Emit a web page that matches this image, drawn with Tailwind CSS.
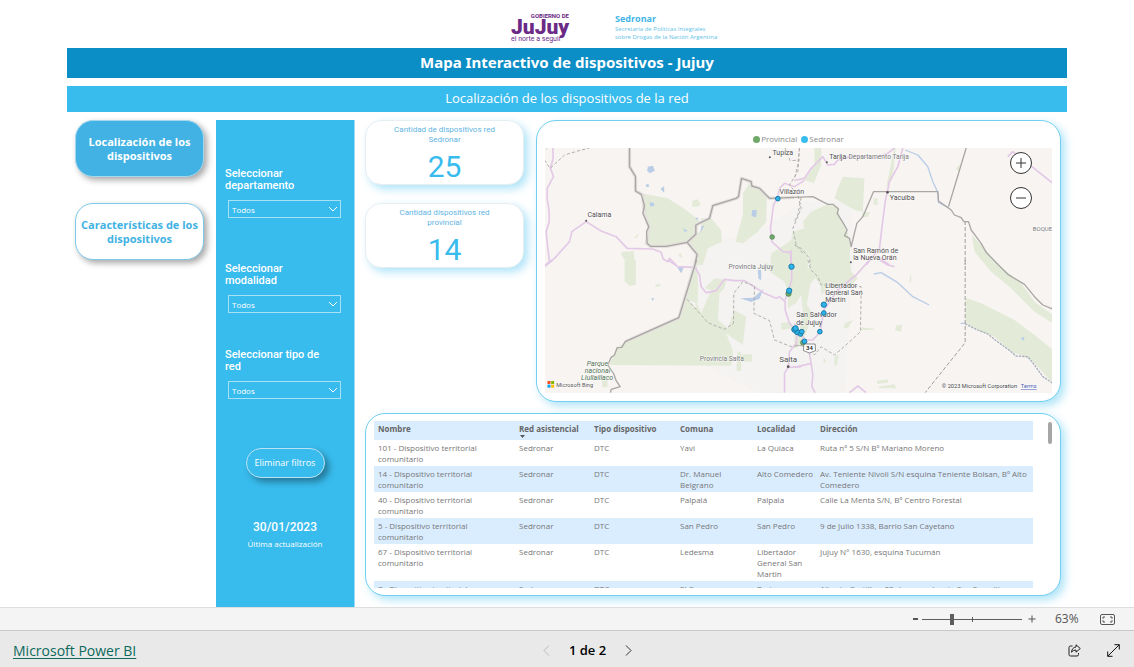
<!DOCTYPE html>
<html lang="es">
<head>
<meta charset="utf-8">
<meta name="viewport" content="width=device-width, initial-scale=1">
<title>Mapa Interactivo de dispositivos - Jujuy</title>
<script src="https://cdn.jsdelivr.net/npm/@tailwindcss/browser@4"></script>
</head>
<body class="flex h-screen flex-col overflow-hidden bg-white font-['Open_Sans',sans-serif]">

<main class="flex min-h-0 flex-1 flex-col overflow-hidden px-[67px]">
  <header class="flex h-12 shrink-0 items-start justify-center gap-[46px] pt-[13px] pl-[142px]">
    <div class="flex w-[58px] flex-col font-[Roboto,sans-serif] text-[#6b2a86]">
      <span class="text-right text-[6px] leading-[6px] font-bold">GOBIERNO DE</span>
      <span class="text-[21px] leading-[16px] font-black">JuJuy</span>
      <span class="text-[7px] leading-[8px] whitespace-nowrap">el norte a seguir</span>
    </div>
    <div class="w-[150px] text-[#41b6e6]">
      <div class="text-[9px] leading-[12px] font-bold">Sedronar</div>
      <div class="text-[6px] leading-[8px] whitespace-nowrap text-[#5fbfe8]">Secretaría de Políticas Integrales<br>sobre Drogas de la Nación Argentina</div>
    </div>
  </header>

  <h1 class="flex h-[30px] shrink-0 items-center justify-center bg-[#0b8dc5] pb-[2px] font-['Noto_Sans',sans-serif] text-[15px] font-bold text-white">Mapa Interactivo de dispositivos - Jujuy</h1>
  <h2 class="mt-2 flex h-[26px] shrink-0 items-center justify-center bg-[#38bbed] text-[13px] text-white">Localización de los dispositivos de la red</h2>

  <div class="mt-2 flex min-h-0 flex-1">
    <nav class="flex w-[149px] shrink-0 flex-col gap-[26px] pr-3 pl-2">
      <button class="h-[57px] rounded-[18px] border border-[#a5d8ee] bg-[#41b2e3] px-2 text-[11px] leading-[14px] font-bold text-white shadow-[3px_3px_6px_rgba(0,0,0,0.35)]">Localización de los<br>dispositivos</button>
      <button class="h-[57px] rounded-[18px] border border-[#7cc9ea] bg-white px-1 text-[11px] leading-[14px] font-bold text-[#41b2e3] shadow-[3px_3px_6px_rgba(0,0,0,0.35)]">Características de los<br>dispositivos</button>
    </nav>

    <aside class="flex w-[139px] shrink-0 flex-col border-r border-[#9bdcf5] bg-[#38bbed] px-[9px] pt-12 text-white">
      <div>
        <label for="dep" class="block w-24 font-[Roboto,sans-serif] text-[11px] leading-[12px] font-medium">Seleccionar departamento</label>
        <div class="relative mt-2 ml-[3px] w-[113px]">
          <select id="dep" class="block h-[18px] w-full appearance-none rounded-none border border-[#a8e0f6] bg-transparent pt-[2px] pl-[3px] text-[8px]"><option>Todos</option></select>
          <svg class="pointer-events-none absolute top-[6px] right-[3px] h-[6px] w-[10px]" viewBox="0 0 10 6" fill="none" stroke="#fff"><path d="M1 1l4 4 4-4"/></svg>
        </div>
      </div>
      <div class="mt-[45px]">
        <label for="mod" class="block w-24 font-[Roboto,sans-serif] text-[11px] leading-[12px] font-medium">Seleccionar modalidad</label>
        <div class="relative mt-2 ml-[3px] w-[113px]">
          <select id="mod" class="block h-[18px] w-full appearance-none rounded-none border border-[#a8e0f6] bg-transparent pt-[2px] pl-[3px] text-[8px]"><option>Todos</option></select>
          <svg class="pointer-events-none absolute top-[6px] right-[3px] h-[6px] w-[10px]" viewBox="0 0 10 6" fill="none" stroke="#fff"><path d="M1 1l4 4 4-4"/></svg>
        </div>
      </div>
      <div class="mt-9">
        <label for="red" class="block w-24 font-[Roboto,sans-serif] text-[11px] leading-[12px] font-medium">Seleccionar tipo de red</label>
        <div class="relative mt-2 ml-[3px] w-[113px]">
          <select id="red" class="block h-[18px] w-full appearance-none rounded-none border border-[#a8e0f6] bg-transparent pt-[2px] pl-[3px] text-[8px]"><option>Todos</option></select>
          <svg class="pointer-events-none absolute top-[6px] right-[3px] h-[6px] w-[10px]" viewBox="0 0 10 6" fill="none" stroke="#fff"><path d="M1 1l4 4 4-4"/></svg>
        </div>
      </div>
      <button class="mt-[49px] h-[30px] w-[79px] self-center rounded-full border border-[#b9e4f5] bg-[#38bbed] text-[9px] shadow-[4px_4px_6px_rgba(0,0,0,0.35)]">Eliminar filtros</button>
      <div class="mt-[42px] text-center font-[Roboto,sans-serif] text-[12px] leading-[14px] font-medium">30/01/2023</div>
      <div class="mt-1 text-center text-[8px] leading-[12px]">Última actualización</div>
    </aside>

    <div class="flex min-w-0 flex-1 flex-col gap-[11px] pr-[6px] pl-[10px]">
      <div class="flex h-[282px] shrink-0 gap-3">
        <div class="flex w-[159px] shrink-0 flex-col gap-[18px]">
          <section class="h-[65px] rounded-[16px] border border-[#e6eef2] bg-white pt-1 text-center font-[Roboto,sans-serif] text-[#38bbed] shadow-[4px_4px_8px_rgba(56,187,237,0.4)]">
            <h3 class="text-[8px] leading-[10px] text-[#62b4e2]">Cantidad de dispositivos red<br>Sedronar</h3>
            <p class="mt-1 text-[30px] leading-[36px]">25</p>
          </section>
          <section class="h-[65px] rounded-[16px] border border-[#e6eef2] bg-white pt-1 text-center font-[Roboto,sans-serif] text-[#38bbed] shadow-[4px_4px_8px_rgba(56,187,237,0.4)]">
            <h3 class="text-[8px] leading-[10px] text-[#62b4e2]">Cantidad dispositivos red<br>provincial</h3>
            <p class="mt-1 text-[30px] leading-[36px]">14</p>
          </section>
        </div>

        <section class="relative min-w-0 flex-1 rounded-[20px] border border-[#72cff2] bg-white px-2 pt-[13px] shadow-[4px_4px_8px_rgba(56,187,237,0.4)]">
          <div class="flex h-[14px] items-start justify-center text-[8px] leading-[10px] text-[#8a8a8a]">
            <span class="flex items-center gap-px"><i class="size-[7px] rounded-full bg-[#6fa96a]"></i>Provincial</span>
            <span class="ml-1 flex items-center gap-px"><i class="size-[7px] rounded-full bg-[#38bbed]"></i>Sedronar</span>
          </div>
          <svg class="block h-[245px] w-full" viewBox="0 0 1524 735" preserveAspectRatio="xMidYMid slice" fill="none" stroke-linejoin="round" font-family="Roboto, sans-serif">
            <rect x="-600" width="2800" height="735" fill="#f7f4f2"/>
            <path d="M640 250L780 160 920 160 930 300 900 735 640 735 420 620 440 300z" fill="#f4f3f2"/>
            <!-- parks and reserves -->
            <g fill="#e3ebd8">
              <g transform="translate(-30 -99)">
                <path d="M320 235L400 250 455 285 495 318 484 358 458 382 395 394 348 394 336 385 343 335 328 300 325 240z"/>
                <path d="M458 382L500 345 500 310 530 310 560 345 562 380 520 400 505 450 486 450 488 418z"/>
                <path d="M625 235L645 205 680 225 697 250 695 320 670 350 625 385 603 380 625 300z"/>
                <path d="M473 258L490 253 498 268 490 275 473 275zM258 412L298 408 300 440 268 432zM298 368l14-14-4 14zM430 420l10-5 5 16zM30 99h10v4l-10 2z"/>
                <path d="M810 340L775 350 770 375 735 400 710 415 708 450 690 440 695 460 720 480 750 500 760 530 760 580 790 560 820 580 820 340z"/>
              </g>
              <g transform="translate(750 -99)">
                <path d="M60 99L80 99 80 150 58 205 30 195 60 150zM145 185L210 190 205 290 180 285 120 250 130 220zM237 250h12v20h-12zM205 290l22 2-8 14h-18z"/>
                <path d="M285 170l14-71 5 0-10 90-20 30zM485 160l12-12-5 22z"/>
                <path d="M25 320L50 290 100 268 132 275 135 310 158 350 168 395 165 420 170 470 190 490 170 510 100 520 60 560 40 640 20 690 0 700 0 500 30 495 45 450 40 400z"/>
                <path d="M532 360L560 390 612 450 680 505 720 560 775 600 775 625 720 590 650 520 590 470 540 410z"/>
              </g>
              <g transform="translate(-30 336)">
                <path d="M486 0L490 50 490 130 460 120 500 160 550 190 575 235 592 260 597 290 590 317 225 315 245 265 272 245 433 173z"/>
                <path d="M500 160L530 90 510 85 540 55 575 60 570 85 555 100 550 180 580 205 600 150 635 170 625 255 575 220 590 260 560 240z"/>
                <path d="M270 0h34v75l-20 2-14-15zM363 73l14-2v8l-14 2zM608 275h12v8h33v22h-33v28h-14zM203 360h16v22h-16zM738 190l30-5 8 20-34 5z"/>
                <path d="M480 115L500 160 540 185 560 260 500 240z"/>
              </g>
              <g transform="translate(750 336)">
                <path d="M513 113L560 130 660 180 720 225 775 270 775 370 720 310 690 290 650 275 600 230 560 215 512 190z"/>
                <path d="M150 190l25-10-15 25h-12zM305 196l18-2-3 22-18-5zM200 202l38 4v4h-38zM350 38v30l-6-4zM248 362l32-4v10l-32 4zM250 380l50-7 5 12h-50zM120 290l12-8-3 30-10 8zM87 290l8 14-8 5z"/>
              </g>
            </g>
            <g fill="#f4f3f2">
              <path d="M812 390l-15 20-10 60 20 30 28-30-8-60z"/><path d="M770 440l-25 40 0 70 20 0 10-60z"/>
            </g>
            <!-- lakes -->
            <g fill="#b9cde6">
              <g transform="translate(-30 -99)"><path d="M340 155l15-3 6 15-15 8-8-8zM378 222l11-9v20zM345 262l14 2v10h-12zM653 285l14 0-2 22-14-4zM335 208h8v8h-8zM482 308h10l-4 8zM446 340l14 8-10 2zM500 335l10-4-12 22z"/></g>
              <g transform="translate(-30 336)"><path d="M428 22l20 0-8 18zM617 115l40-2 30-27-12 30-25 10zM670 30h10v30l-8-4zM350 115h10l-6 8z"/></g>
              <g transform="translate(750 336)"><path d="M680 233l10-2-2 10h-6z"/></g>
            </g>
            <g stroke="#b9cde6" stroke-width="4">
              <path transform="translate(750 -99)" d="M332 105L370 120 400 155 415 200 430 232 432 262 462 278"/>
              <path transform="translate(750 336)" d="M238 42L260 38 310 68 355 110 404 135M498 190h16"/>
            </g>
            <!-- roads -->
            <g stroke="#e4c9e6" stroke-width="5">
              <path transform="translate(-30 -99)" d="M55 99L56 130 48 160 57 185 38 220 38 250 44 290 44 320 35 350 40 400 45 440 33 450 60 430 105 380 112 350 155 320 200 348 245 365 278 400 355 402 380 412 386 432 400 440 405 430 425 450"/>
              <path transform="translate(-30 336)" d="M30 20L55 0M400 0L430 20 482 22 495 45 500 80 515 98 545 92 570 58 600 62 630 62 690 100 725 115 735 110 752 125 752 150 765 190 788 215 785 250 765 275 762 320 750 340 750 398M762 322L800 320M769 -30L771 20 772 60 752 120"/>
              <path transform="translate(-30 -99)" d="M770 450L768 412 745 410 712 380 708 340 717 270 730 245 735 220 750 205 780 215 810 196"/>
              <path transform="translate(750 -99)" d="M0 196L30 190 50 160 85 125 100 150 120 148 130 135 180 122 240 130 280 115 300 99M325 99L310 155 285 200 272 260 262 340 255 400 215 450M640 125L655 110 700 145 775 205M250 425L285 450"/>
              <path transform="translate(750 336)" d="M225 0L185 45 130 90 88 150 78 215 55 240 20 240M0 190L40 255 50 310 55 345 52 380 62 398M0 322L50 310M165 398L190 378 215 398M255 0L280 15 300 20"/>
            </g>
            <!-- provincial limits -->
            <g stroke="#b4b0ae" stroke-width="3" stroke-dasharray="10 6">
              <path transform="translate(-30 -99)" d="M30 135L47 160 90 120 130 108 165 99M795 99L790 170 765 210 790 240 800 280 775 340 785 390 805 415M752 99l15 38 30-2"/>
              <path transform="translate(750 -99)" d="M15 99L10 150 0 190M20 247L10 300 0 320M0 390L20 400 45 430 48 450"/>
              <path transform="translate(-30 336)" d="M458 118L500 165 520 188 570 208 597 190 598 100 625 65 660 78 658 160 705 182 720 240 770 260 808 255"/>
              <path transform="translate(750 336)" d="M40 0L50 30 70 50 80 75 110 75M130 75L200 80 198 215 160 250 120 285 80 260 60 285 40 260 0 255"/>
            </g>
            <g stroke="#a29e9c" stroke-width="3" stroke-dasharray="12 6">
              <path transform="translate(750 -99)" d="M512 318V450"/>
              <path transform="translate(750 336)" d="M512 0V248L392 398"/>
            </g>
            <path transform="translate(750 336)" d="M512 192L545 208 580 222 605 242 650 275 665 288 700 290 722 318 745 350 775 370" stroke="#a9b0bd" stroke-width="4" stroke-dasharray="7 3"/>
            <!-- national borders -->
            <g stroke="#e3e0de" stroke-width="10">
              <path transform="translate(-30 -99)" d="M285 99L285 155 303 185 303 228 325 240 330 300 343 335 336 385 348 394 395 394 458 382 484 358 484 330 525 310 535 272 605 250 612 245 621 190 650 200 652 213 675 220 705 250 780 247M458 382L488 418 484 437 433 608 272 680"/>
            </g>
            <g stroke="#aaa6a4" stroke-width="4">
              <path transform="translate(-30 -99)" d="M285 99L285 155 303 185 303 228 320 238 330 272 325 295 343 335 336 350 338 385 348 394 395 394 458 382 484 358 484 330 525 310 535 272 605 250 612 245 621 190 650 200 652 213 675 220 705 250 780 247M458 382L488 418 482 445"/>
              <path transform="translate(-30 336)" d="M486 0L433 173 272 245 262 262 248 263 240 285 230 292 220 315 238 342 245 362 257 380 230 388 228 398"/>
              <path transform="translate(750 -99)" d="M0 247L55 245 100 268 115 268 132 282 128 295 145 322 158 345 150 362 165 370 170 395 187 325 205 305 237 230 430 230 432 258 470 285 480 300 500 308 508 320 522 320 530 345 545 365 560 385 575 412 612 450 640 478 690 508 720 545 745 570 775 582M515 99L462 275"/>
            </g>
            <!-- place names -->
            <g fill="#4d4d4d" font-size="21" stroke="#fff" stroke-width="3" stroke-opacity=".8" paint-order="stroke">
              <text x="684" y="21">Tupiza</text><text x="705" y="138">Villazón</text><text x="129" y="208">Calama</text>
              <text x="854" y="33">Tarija</text><text x="912" y="33" font-size="20" fill="#777">Departamento Tarija</text>
              <text x="1036" y="155">Yacuiba</text><text x="926" y="314">San Ramón de</text><text x="926" y="335">la Nueva Orán</text>
              <text x="1465" y="248" font-size="18" fill="#777">BOQUERÓN</text>
              <text x="552" y="364" font-size="20" fill="#777">Provincia Jujuy</text><text x="466" y="640" font-size="20" fill="#777">Provincia Salta</text>
              <text x="842" y="419">Libertador</text><text x="842" y="440">General San</text><text x="842" y="461">Martín</text>
              <text x="755" y="508">San Salvador</text><text x="755" y="531">de Jujuy</text>
              <text x="704" y="643" font-size="24">Salta</text>
              <g font-style="italic" fill="#4f7253" text-anchor="middle"><text x="159" y="655">Parque</text><text x="159" y="676">nacional</text><text x="158" y="697">Llullaillaco</text></g>
              <text x="35" y="716" font-size="17" fill="#555">Microsoft Bing</text>
              <text x="1192" y="720" font-size="17" fill="#444">© 2023 Microsoft Corporation</text>
              <a href="#terms"><text x="1429" y="720" font-size="17" fill="#4a62b5" text-decoration="underline">Terms</text></a>
            </g>
            <g fill="#555"><circle cx="676" cy="28" r="3"/><circle cx="125" cy="218" r="3"/><circle cx="847" cy="43" r="3"/><circle cx="1029" cy="133" r="4"/><circle cx="919" cy="343" r="3"/><circle cx="731" cy="656" r="4"/></g>
            <path d="M9 699h9v9h-9z" fill="#f25022"/><path d="M20 699h9v9h-9z" fill="#7fba00"/><path d="M9 710h9v9h-9z" fill="#00a4ef"/><path d="M20 710h9v9h-9z" fill="#ffb900"/>
            <path d="M778 588h34l1 20-8 3-10 4-10-4-8-3z" fill="#fff" stroke="#555" stroke-width="2"/>
            <text x="795" y="606" font-size="18" font-weight="700" fill="#333" text-anchor="middle">34</text>
            <!-- devices -->
            <g stroke="#4c7a4a" stroke-width="2" fill="#6fa96a"><circle cx="683" cy="267" r="7"/><circle cx="732" cy="437" r="8"/><circle cx="775" cy="584" r="7"/><circle cx="750" cy="544" r="8"/></g>
            <g stroke="#167aa8" stroke-width="3" fill="#2fb3e8">
              <circle cx="700" cy="152" r="7"/><circle cx="741" cy="356" r="8"/><circle cx="734" cy="428" r="8"/>
              <circle cx="838" cy="470" r="8"/><circle cx="838" cy="495" r="7"/><circle cx="826" cy="551" r="7"/>
              <circle cx="758" cy="552" r="8"/><circle cx="768" cy="558" r="7"/><circle cx="772" cy="551" r="7"/><circle cx="750" cy="545" r="8"/><circle cx="753" cy="541" r="8"/><circle cx="780" cy="580" r="7"/>
            </g>
          </svg>
          <div class="absolute top-[31px] right-[28px] flex flex-col gap-[13px]">
            <button aria-label="Acercar" class="flex size-[22px] items-center justify-center rounded-full border border-[#333] bg-white"><svg class="size-[12px]" viewBox="0 0 12 12" stroke="#333"><path d="M6 1v10M1 6h10"/></svg></button>
            <button aria-label="Alejar" class="flex size-[22px] items-center justify-center rounded-full border border-[#333] bg-white"><svg class="size-[12px]" viewBox="0 0 12 12" stroke="#333"><path d="M1 6h10"/></svg></button>
          </div>
        </section>
      </div>

      <section class="flex h-[183px] shrink-0 justify-between rounded-[20px] border border-[#72cff2] bg-white pt-[7px] pr-[8px] pb-[7px] pl-2 shadow-[4px_4px_8px_rgba(56,187,237,0.4)]">
        <div class="min-w-0 flex-1 overflow-hidden pr-[15px]">
          <table class="w-full table-fixed border-collapse text-left text-[8px] leading-[11px] text-[#777] [&_td]:px-1 [&_td]:pt-[2px] [&_td]:pb-[2px] [&_td]:align-top [&_th]:px-1 [&_th]:pt-[2px] [&_th]:align-top [&_tbody_tr:nth-child(even)]:bg-[#daedff]">
            <colgroup><col class="w-[141px]"><col class="w-[75px]"><col class="w-[86px]"><col class="w-[77px]"><col class="w-[63px]"><col></colgroup>
            <thead><tr class="h-[19px] bg-[#daedff] text-[#666]"><th>Nombre</th><th class="relative whitespace-nowrap">Red asistencial<svg class="absolute bottom-[2px] left-[5px] h-[3px] w-[5px]" viewBox="0 0 5 3" fill="#555"><path d="M0 0h5L2.500 3z"/></svg></th><th class="whitespace-nowrap">Tipo dispositivo</th><th>Comuna</th><th>Localidad</th><th>Dirección</th></tr></thead>
            <tbody>
              <tr><td>101 - Dispositivo territorial<br>comunitario</td><td>Sedronar</td><td>DTC</td><td>Yavi</td><td>La Quiaca</td><td>Ruta nº 5 S/N Bº Mariano Moreno</td></tr>
              <tr><td>14 - Dispositivo territorial<br>comunitario</td><td>Sedronar</td><td>DTC</td><td>Dr. Manuel<br>Belgrano</td><td class="whitespace-nowrap">Alto Comedero</td><td>Av. Teniente Nivoli S/N esquina Teniente Bolsan, Bº Alto Comedero</td></tr>
              <tr><td>40 - Dispositivo territorial<br>comunitario</td><td>Sedronar</td><td>DTC</td><td>Palpalá</td><td>Palpala</td><td>Calle La Menta S/N, Bº Centro Forestal</td></tr>
              <tr><td>5 - Dispositivo territorial<br>comunitario</td><td>Sedronar</td><td>DTC</td><td>San Pedro</td><td>San Pedro</td><td>9 de Julio 1338, Barrio San Cayetano</td></tr>
              <tr><td>67 - Dispositivo territorial<br>comunitario</td><td>Sedronar</td><td>DTC</td><td>Ledesma</td><td>Libertador<br>General San<br>Martin</td><td>Jujuy N° 1630, esquina Tucumán</td></tr>
              <tr><td>7 - Dispositivo territorial<br>comunitario</td><td>Sedronar</td><td>DTC</td><td>El Carmen</td><td>Perico</td><td>Alberto Castillo y 25 de mayo, barrio San Expedito</td></tr>
            </tbody>
          </table>
        </div>
        <div class="mt-px h-[22px] w-[4px] rounded-full bg-[#a6a6a6]"></div>
      </section>
    </div>
  </div>
</main>

<div class="flex h-[24px] shrink-0 items-center justify-end border-y border-t-[#dedede] border-b-[#c8c8c8] bg-[#f4f4f4] pr-[19px] text-[#555]">
  <button aria-label="Reducir" class="flex w-[5px] justify-center"><svg class="h-[2px] w-[5px]" viewBox="0 0 5 2"><path d="M0 0h5v2H0z" fill="#555"/></svg></button>
  <div class="relative ml-[4px] flex h-3 w-[100px] items-center">
    <span class="absolute left-[50px] h-[5px] w-px bg-[#605e5c]"></span>
    <input type="range" aria-label="Zoom" min="0" max="100" value="29" class="h-3 w-full appearance-none bg-transparent [&::-webkit-slider-runnable-track]:h-px [&::-webkit-slider-runnable-track]:bg-[#605e5c] [&::-webkit-slider-thumb]:-mt-[5px] [&::-webkit-slider-thumb]:h-[11px] [&::-webkit-slider-thumb]:w-[4px] [&::-webkit-slider-thumb]:appearance-none [&::-webkit-slider-thumb]:bg-[#605e5c]">
  </div>
  <button aria-label="Ampliar" class="ml-[6px]"><svg class="size-[8px]" viewBox="0 0 8 8" stroke="#555"><path d="M4 .5v7M.5 4h7"/></svg></button>
  <span class="ml-[19px] w-[26px] text-[12px]">63%</span>
  <button aria-label="Ajustar a la página" class="ml-[19px]"><svg class="h-[11px] w-[15px]" viewBox="0 0 15 11" fill="none" stroke="#555"><rect x=".5" y=".5" width="14" height="10" rx="1.500"/><path d="M5 3H3v1.800M3 6.200V8h2M10 3h2v1.800M12 6.200V8h-2"/></svg></button>
</div>

<footer class="grid h-9 shrink-0 grid-cols-3 items-center bg-[#e9e9e9] pt-[3px] pr-[14px] pl-[13px]">
  <a href="#powerbi" class="justify-self-start text-[14px] leading-[18px] text-[#0b6a5b] underline underline-offset-2">Microsoft Power BI</a>
  <div class="flex items-center gap-[19px] justify-self-center pl-[42px]">
    <button aria-label="Página anterior"><svg class="h-[11px] w-[7px]" viewBox="0 0 7 11" fill="none" stroke="#bbb"><path d="M6 .5l-5 5 5 5"/></svg></button>
    <span class="text-[13px] font-semibold text-black">1 de 2</span>
    <button aria-label="Página siguiente"><svg class="h-[11px] w-[7px]" viewBox="0 0 7 11" fill="none" stroke="#333"><path d="M1 .5l5 5-5 5"/></svg></button>
  </div>
  <div class="flex items-center gap-[26px] justify-self-end">
    <button aria-label="Compartir"><svg class="size-[13px]" viewBox="0 0 13 13" fill="none" stroke="#222" stroke-linejoin="round"><path d="M4.500 2H2.500Q1 2 1 3.500v7Q1 12 2.500 12h6.500q1.500 0 1.500-1.500V9"/><path d="M8 .8l4.300 3.700L8 8.200V6Q5 6 3.500 8.200 4 3.400 8 3z"/></svg></button>
    <button aria-label="Pantalla completa"><svg class="size-[13px]" viewBox="0 0 13 13" fill="none" stroke="#111"><path d="M.8 12.200L12.200.8M7.500.7h4.800v4.800M.7 7.500v4.800h4.800"/></svg></button>
  </div>
</footer>
</body>
</html>
